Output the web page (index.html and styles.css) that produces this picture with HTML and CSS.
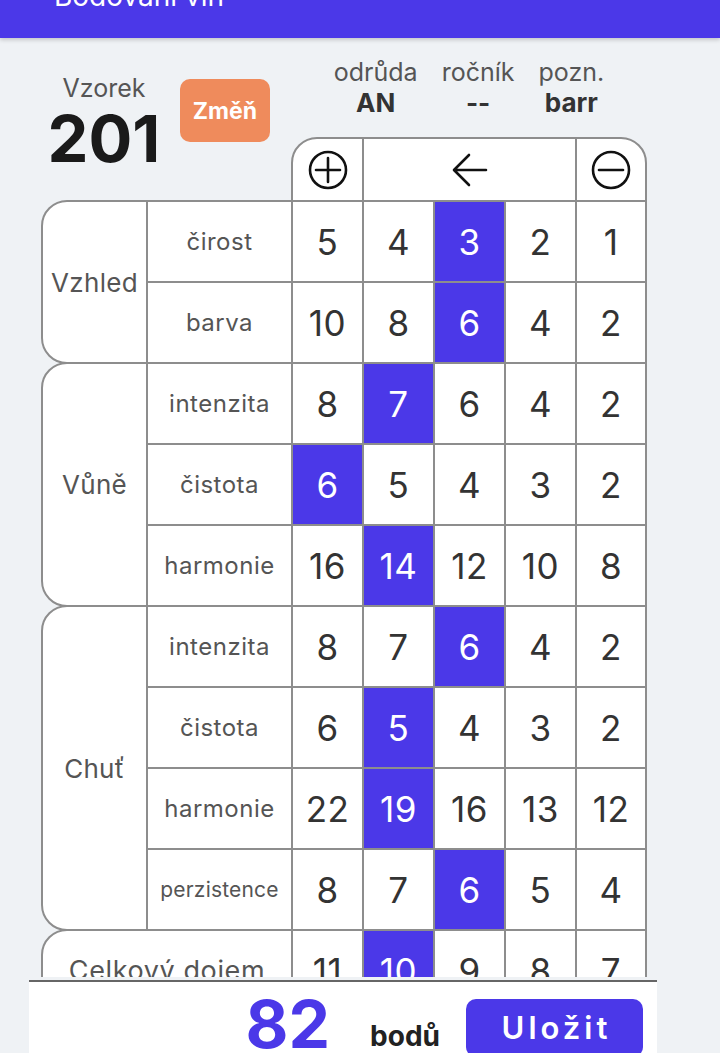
FILE: index.html
```html
<!DOCTYPE html>
<html lang="cs">
<head>
<meta charset="utf-8">
<title>Bodování vín</title>
<link rel="stylesheet" href="styles.css">
</head>
<body>
<header class="appbar"><h1 class="appbar-title">Bodování vín</h1></header>
<main class="content">
  <section class="top">
    <div class="sample">
      <div class="sample-id">
        <div class="sample-label">Vzorek</div>
        <div class="sample-num">201</div>
      </div>
      <button class="btn-change">Změň</button>
    </div>
    <div class="side">
      <div class="meta">
        <div class="meta-item"><div class="meta-k">odrůda</div><div class="meta-v">AN</div></div>
        <div class="meta-item"><div class="meta-k">ročník</div><div class="meta-v">--</div></div>
        <div class="meta-item"><div class="meta-k">pozn.</div><div class="meta-v">barr</div></div>
      </div>
      <div class="controls">
        <div class="ctl">
          <svg width="44" height="44" viewBox="0 0 44 44"><circle cx="22" cy="22" r="18" fill="none" stroke="#111" stroke-width="2.6"/><path d="M22 10v24M10 22h24" fill="none" stroke="#111" stroke-width="2.6" stroke-linecap="round"/></svg>
        </div>
        <div class="ctl">
          <svg width="36" height="34" viewBox="0 0 36 34"><path d="M34 17H3M17 2L2 17l15 15" fill="none" stroke="#111" stroke-width="2.6" stroke-linecap="round" stroke-linejoin="round"/></svg>
        </div>
        <div class="ctl">
          <svg width="44" height="44" viewBox="0 0 44 44"><circle cx="22" cy="22" r="18" fill="none" stroke="#111" stroke-width="2.6"/><path d="M10 22h24" fill="none" stroke="#111" stroke-width="2.6" stroke-linecap="round"/></svg>
        </div>
      </div>
    </div>
  </section>

  <div class="group">
    <div class="gname">Vzhled</div>
    <div class="rows">
      <div class="row"><div class="lbl">čirost</div><div class="c">5</div><div class="c">4</div><div class="c on">3</div><div class="c">2</div><div class="c">1</div></div>
      <div class="row"><div class="lbl">barva</div><div class="c">10</div><div class="c">8</div><div class="c on">6</div><div class="c">4</div><div class="c">2</div></div>
    </div>
  </div>

  <div class="group">
    <div class="gname">Vůně</div>
    <div class="rows">
      <div class="row"><div class="lbl">intenzita</div><div class="c">8</div><div class="c on">7</div><div class="c">6</div><div class="c">4</div><div class="c">2</div></div>
      <div class="row"><div class="lbl">čistota</div><div class="c on">6</div><div class="c">5</div><div class="c">4</div><div class="c">3</div><div class="c">2</div></div>
      <div class="row"><div class="lbl">harmonie</div><div class="c">16</div><div class="c on">14</div><div class="c">12</div><div class="c">10</div><div class="c">8</div></div>
    </div>
  </div>

  <div class="group">
    <div class="gname">Chuť</div>
    <div class="rows">
      <div class="row"><div class="lbl">intenzita</div><div class="c">8</div><div class="c">7</div><div class="c on">6</div><div class="c">4</div><div class="c">2</div></div>
      <div class="row"><div class="lbl">čistota</div><div class="c">6</div><div class="c on">5</div><div class="c">4</div><div class="c">3</div><div class="c">2</div></div>
      <div class="row"><div class="lbl">harmonie</div><div class="c">22</div><div class="c on">19</div><div class="c">16</div><div class="c">13</div><div class="c">12</div></div>
      <div class="row"><div class="lbl lbl-sm">perzistence</div><div class="c">8</div><div class="c">7</div><div class="c on">6</div><div class="c">5</div><div class="c">4</div></div>
    </div>
  </div>

  <div class="group">
    <div class="gname gname-wide">Celkový dojem</div>
    <div class="rows">
      <div class="row row-total"><div class="c">11</div><div class="c on">10</div><div class="c">9</div><div class="c">8</div><div class="c">7</div></div>
    </div>
  </div>
</main>
<footer class="footer">
  <div class="total">82</div>
  <div class="unit">bodů</div>
  <button class="btn-save">Uložit</button>
</footer>
</body>
</html>
```

FILE: styles.css
```css
* { box-sizing: border-box; }
html, body { margin: 0; padding: 0; }
body {
  width: 720px;
  height: 1053px;
  overflow: hidden;
  background: #eff2f5;
  font-family: Inter, "Noto Sans", sans-serif;
  color: #333;
}

.appbar {
  position: relative;
  z-index: 1;
  height: 38px;
  background: #4b38e8;
  box-shadow: 0 2px 4px rgba(0, 0, 0, 0.18);
  overflow: hidden;
}
.appbar-title {
  margin: -21px 0 0 54px;
  font-size: 28px;
  line-height: 34px;
  font-weight: 400;
  color: #fff;
}

.content {
  height: 939px;
  overflow: hidden;
  padding-left: 41px;
}

.top {
  display: grid;
  grid-template-columns: 250px 356px;
}
.sample {
  display: flex;
  align-items: flex-start;
}
.sample-id {
  margin: 38px 0 0 5px;
  width: 116px;
  text-align: center;
}
.sample-label {
  font-size: 25px;
  line-height: 24px;
  color: #555;
}
.sample-num {
  margin-top: 0;
  font-size: 65px;
  line-height: 78px;
  font-weight: 700;
  color: #1a1a1a;
}
.btn-change {
  margin: 41px 0 0 18px;
  width: 90px;
  height: 63px;
  padding: 0;
  border: 0;
  border-radius: 10px;
  background: #ef8b5c;
  color: #fff;
  font-family: Inter, "Noto Sans", sans-serif;
  font-size: 23px;
  font-weight: 700;
}

.side { padding-top: 20px; }
.meta {
  display: flex;
  justify-content: center;
  gap: 24px;
}
.meta-item { text-align: center; }
.meta-k {
  font-size: 25px;
  line-height: 28px;
  color: #555;
}
.meta-v {
  margin-top: 3px;
  font-size: 26px;
  line-height: 28px;
  font-weight: 700;
  color: #333;
}
.controls {
  margin-top: 20px;
  height: 65px;
  display: grid;
  grid-template-columns: 71px 213px 1fr;
  border: 2px solid #8d8d8d;
  border-radius: 26px 26px 0 0;
  background: #fff;
  overflow: hidden;
}
.ctl {
  display: flex;
  align-items: center;
  justify-content: center;
  border-right: 2px solid #8d8d8d;
}
.ctl:last-child { border-right: 0; }

.group {
  display: flex;
  width: 606px;
  margin-top: -2px;
  border: 2px solid #8d8d8d;
  border-radius: 26px 0 0 26px;
  background: #fff;
  overflow: hidden;
}
.gname {
  flex: none;
  width: 105px;
  border-right: 2px solid #8d8d8d;
  display: flex;
  align-items: center;
  justify-content: center;
  font-size: 26px;
  letter-spacing: 0.3px;
  color: #555;
}
.gname-wide {
  width: 250px;
  font-size: 27px;
  letter-spacing: 0.6px;
}
.rows { flex: 1; }
.row {
  display: grid;
  grid-template-columns: 145px repeat(4, 71px) 1fr;
  height: 81px;
  border-bottom: 2px solid #8d8d8d;
}
.row:last-child {
  height: 79px;
  border-bottom: 0;
}
.row-total { grid-template-columns: repeat(4, 71px) 1fr; }
.lbl, .c {
  display: flex;
  align-items: center;
  justify-content: center;
  border-right: 2px solid #8d8d8d;
}
.c:last-child { border-right: 0; }
.lbl {
  font-size: 24px;
  letter-spacing: 0.5px;
  color: #555;
}
.lbl-sm {
  font-size: 21px;
  letter-spacing: 0.2px;
}
.c {
  font-size: 35px;
  letter-spacing: 0.5px;
  color: #333;
}
.c.on {
  background: #4b38e8;
  color: #fff;
}

.footer {
  margin: 3px 0 0 29px;
  width: 628px;
  height: 73px;
  background: #fff;
  border-top: 2px solid #666;
  display: flex;
  justify-content: flex-end;
  align-items: flex-start;
  padding-right: 14px;
}
.total {
  margin-top: 11px;
  font-size: 66px;
  line-height: 62px;
  font-weight: 700;
  color: #4b38e8;
}
.unit {
  margin: 38px 0 0 40px;
  font-size: 28px;
  line-height: 32px;
  font-weight: 700;
  color: #222;
}
.btn-save {
  margin: 17px 0 0 26px;
  width: 177px;
  height: 58px;
  padding: 0 0 0 4px;
  border: 0;
  border-radius: 10px;
  background: #4b38e8;
  color: #fff;
  font-family: Inter, "Noto Sans", sans-serif;
  font-size: 31px;
  line-height: 58px;
  font-weight: 600;
  letter-spacing: 4px;
}
```
